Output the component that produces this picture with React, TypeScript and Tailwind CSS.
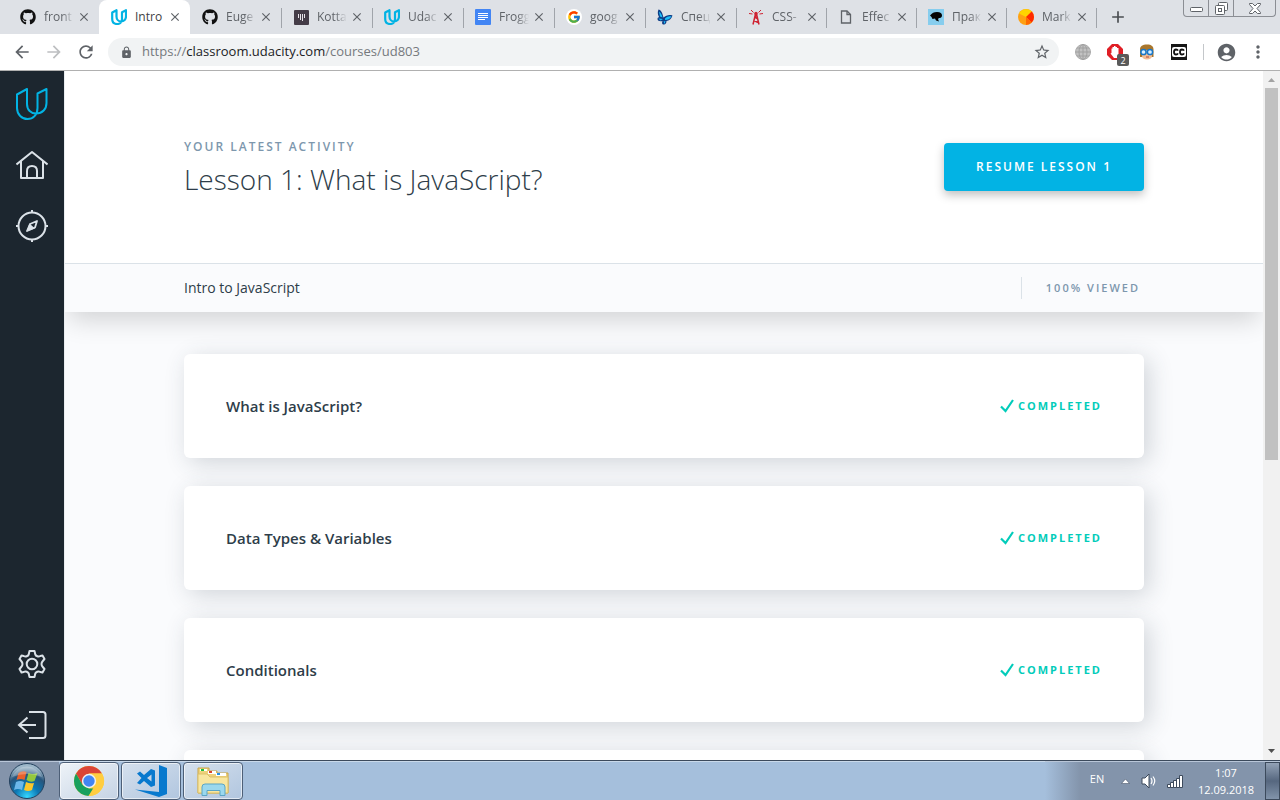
import type { ReactNode } from "react";
import { FaGithub } from "react-icons/fa";
import { FcGoogle } from "react-icons/fc";
import {
  MdAccountCircle,
  MdAdd,
  MdArrowBack,
  MdArrowForward,
  MdClose,
  MdLock,
  MdMoreVert,
  MdRefresh,
  MdStarBorder,
} from "react-icons/md";

function UdacityMark({ size, stroke }: { size: number; stroke: number }) {
  return (
    <svg width={size} height={size} viewBox="0 0 32 32" fill="none" stroke="#02b3e4" strokeWidth={stroke} strokeLinejoin="round">
      <path d="M1 6.500 11 1v15c0 6 4 9.500 9 9.500C26.500 25.500 30.500 21 30.500 15V1L21.500 5.500V20c0 7-4.500 11-10 11S1 26.500 1 20Z" />
    </svg>
  );
}

function UdacityFavicon() {
  return (
    <svg width="16" height="16" viewBox="0 0 16 16" fill="none" stroke="#02b3e4" strokeWidth="2.200" strokeLinejoin="round">
      <path d="M1.200 3.500 5.500 1.200v6.300C5.500 10.500 7.500 12.500 10 12.500c3 0 5-2.200 5-5.200V1.200l-4 2V10c0 3-2.200 5-4.800 5-3 0-5-2-5-5Z" />
    </svg>
  );
}

function KottansFavicon() {
  return (
    <svg width="15" height="15" viewBox="0 0 15 15">
      <rect width="15" height="15" rx="1" fill="#443c47" />
      <path d="M4.500 4v4M6.500 4v6M8.500 4v7M10.500 4v4" stroke="#e8e4ea" />
    </svg>
  );
}

function DocsFavicon() {
  return (
    <svg width="16" height="16" viewBox="0 0 16 16">
      <rect width="16" height="16" rx="1" fill="#4285f4" />
      <path d="M3 4.500h10M3 6.500h10M3 8.500h10M3 10.500h7" stroke="#fff" />
    </svg>
  );
}

function ButterflyFavicon() {
  return (
    <svg width="16" height="16" viewBox="0 0 16 16">
      <path d="M1.500.5C4 1 5.500 4 6.500 8.500 9 6.500 12 5.500 15.500 6.500c-1 3.500-3.500 5-6 5.500 0 2-1 3.500-2.500 3.500-2.500 0-2-2-1.500-3.500C3 12.500.5 12 .5 10c0-1 .5-1.500 1.500-2C.5 5.500.5 2.500 1.500.5Z" fill="#0d3c86" />
      <path d="M2 2.500C4 4 5 6 5.500 8.500L3 7.500ZM1.500 9.500 6 10l-2.500 1.500ZM8 9.500c2-2 4-2.500 6.500-2-1.500 2.500-3.500 3.500-6.500 3.500Zm-1.500 3 2-.5-1 3Z" fill="#1fc0fa" />
    </svg>
  );
}

function TowerFavicon() {
  return (
    <svg width="16" height="16" viewBox="0 0 16 16" fill="none" stroke="#cf2232">
      <path d="M7.500 5 5 15.500M8.500 5 11 15.500M6 11.500l4 2M7 8l2.500 2M6.500 7h3" strokeWidth="1.500" />
      <path d="m3 1 2.500 2.500M1 4.500l3.500.5M13 1l-2.500 2.500M15 4.500l-3.500.5" />
      <circle cx="8" cy="4.500" r="1.700" fill="#cf2232" stroke="none" />
    </svg>
  );
}

function PageFavicon() {
  return (
    <svg width="12" height="14" viewBox="0 0 12 14" fill="none" stroke="#5f6368" strokeWidth="1.300">
      <path d="M1.500 1h5.500l3.500 3.500V13h-9Z" />
      <path d="M7 1v3.500h3.500" />
    </svg>
  );
}

function HeadFavicon() {
  return (
    <svg width="16" height="16" viewBox="0 0 16 16">
      <rect width="16" height="16" fill="#86cdee" />
      <path d="M2 6.500C4 4 6 3 9 3c3.500 0 5 1.500 5 3.500S12.500 9 11 9l-1 1 1 2.500L8 11.500 7 9.500 4.500 10 3.500 8Z" fill="#050505" />
    </svg>
  );
}

function OrangeFavicon() {
  return (
    <svg width="16" height="16" viewBox="0 0 16 16">
      <circle cx="8" cy="8" r="8" fill="#ffa012" />
      <path d="M8 8 1 4.500A8 8 0 0 1 13.700 2.400Z" fill="#ffd400" />
      <path d="m8 8 5.700-5.600A8 8 0 0 1 13.700 13.600Z" fill="#ff2a00" />
      <path d="m8 8 5.700 5.600A8 8 0 0 1 8 16Z" fill="#ff6a00" />
    </svg>
  );
}

type Tab = { title: string; icon: ReactNode; active?: boolean; line?: boolean; width: string };

const wide = "w-[91px]";
const narrow = "w-[90px]";

const tabs: Tab[] = [
  { title: "front", icon: <FaGithub size={16} color="#111" />, width: wide },
  { title: "Intro", icon: <UdacityFavicon />, active: true, width: wide },
  { title: "Euge", icon: <FaGithub size={16} color="#111" />, width: wide, line: true },
  { title: "Kotta", icon: <KottansFavicon />, width: wide, line: true },
  { title: "Udac", icon: <UdacityFavicon />, width: wide, line: true },
  { title: "Frogg", icon: <DocsFavicon />, width: wide, line: true },
  {
    title: "goog",
    icon: (
      <span className="flex size-4 items-center justify-center rounded-full bg-white">
        <FcGoogle size={14} />
      </span>
    ),
    width: wide,
    line: true,
  },
  { title: "Спец", icon: <ButterflyFavicon />, width: wide, line: true },
  { title: "CSS-", icon: <TowerFavicon />, width: narrow, line: true },
  { title: "Effec", icon: <PageFavicon />, width: narrow, line: true },
  { title: "Прак", icon: <HeadFavicon />, width: narrow, line: true },
  { title: "Mark", icon: <OrangeFavicon />, width: narrow, line: true },
];

function TabStrip() {
  return (
    <div className="flex h-[34px] shrink-0 bg-[#dee1e6] pl-2">
      {tabs.map((tab, i) => (
        <div
          key={i}
          className={`relative flex shrink-0 items-center pl-3 ${tab.width} ${tab.active ? "rounded-t-lg bg-white" : ""}`}
        >
          <button type="button" className="flex min-w-0 items-center gap-2">
            <span className="flex w-4 shrink-0 items-center justify-center">{tab.icon}</span>
            <span
              className={`w-[30px] overflow-hidden text-left text-xs whitespace-nowrap ${
                tab.active ? "text-[#3c4043]" : "text-[#5f6368] [mask-image:linear-gradient(to_right,#000_60%,transparent)]"
              }`}
            >
              {tab.title}
            </span>
          </button>
          <button type="button" aria-label={`Close ${tab.title}`} className="ml-[3px] text-[#5f6368]">
            <MdClose size={14} />
          </button>
          {tab.line && <span className="absolute top-2 -right-px h-5 w-px bg-[#a0a4aa]" />}
        </div>
      ))}
      <button type="button" aria-label="New tab" className="ml-3 text-[#4a4e52]">
        <MdAdd size={20} />
      </button>
      <div className="mr-1 ml-auto flex h-[17px] self-start rounded-b border border-t-0 border-[#8b8e94] text-[#5f6368]">
        <button type="button" aria-label="Minimize" className="flex w-[25px] items-center justify-center border-r border-[#8b8e94]">
          <svg width="13" height="6" viewBox="0 0 13 6" className="mt-1">
            <rect x=".5" y=".5" width="12" height="4" rx="1" fill="#fff" stroke="currentColor" />
          </svg>
        </button>
        <button type="button" aria-label="Restore" className="flex w-[25px] items-center justify-center border-r border-[#8b8e94]">
          <svg width="13" height="13" viewBox="0 0 13 13" fill="#fff" stroke="currentColor">
            <rect x="3.500" y=".5" width="9" height="8" rx="1" />
            <rect x=".5" y="3.500" width="9" height="9" rx="1" />
            <rect x="3.500" y="6.500" width="3" height="3" />
          </svg>
        </button>
        <button type="button" aria-label="Close window" className="flex w-[41px] items-center justify-center">
          <svg width="12" height="11" viewBox="0 0 12 11" fill="#fff" stroke="currentColor">
            <path d="M.5.5h3L6 3 8.500.5h3v1L8 5.500l3.500 4v1h-3L6 8l-2.500 2.500h-3v-1l3.500-4-3.500-4Z" />
          </svg>
        </button>
      </div>
    </div>
  );
}

function ToolButton({ label, children }: { label: string; children: ReactNode }) {
  return (
    <button type="button" aria-label={label} className="flex w-8 shrink-0 items-center justify-center text-[#5f6368]">
      {children}
    </button>
  );
}

function Toolbar() {
  return (
    <div className="flex h-[37px] shrink-0 items-center border-b border-[#b0b0b0] bg-white px-1.5">
      <ToolButton label="Back"><MdArrowBack size={20} /></ToolButton>
      <ToolButton label="Forward"><MdArrowForward size={20} color="#bdbfc1" /></ToolButton>
      <ToolButton label="Reload"><MdRefresh size={20} /></ToolButton>
      <div className="mr-2 ml-1.5 flex h-7 min-w-0 flex-1 items-center rounded-full bg-[#f1f3f4] pr-2 pl-3 text-[13px] text-[#75797d]">
        <MdLock size={13} className="mr-[9px] shrink-0 text-[#5f6368]" />
        <span className="whitespace-nowrap">
          https://<span className="text-[#202124]">classroom.udacity.com</span>/courses/ud803
        </span>
        <input type="text" aria-label="Address" className="min-w-0 flex-1 bg-transparent outline-none" />
        <button type="button" aria-label="Bookmark this page" className="text-[#5f6368]">
          <MdStarBorder size={18} />
        </button>
      </div>
      <ToolButton label="Translate">
        <svg width="16" height="16" viewBox="0 0 16 16" fill="none" stroke="#a0a0a0">
          <circle cx="8" cy="8" r="7.500" fill="#c2c2c2" stroke="#adadad" />
          <path d="M.5 8h15M8 .5v15M2 4h12M2 12h12" />
          <ellipse cx="8" cy="8" rx="4" ry="7.500" />
        </svg>
      </ToolButton>
      <ToolButton label="Ad blocker">
        <span className="relative">
          <svg width="16" height="16" viewBox="0 0 16 16">
            <path d="M5 0h6l5 5v6l-5 5H5l-5-5V5Z" fill="#e01e25" />
            <path d="M4.500 9V4.500h1V3H7V2h1.500v1H10v1h1.500v6L10 14H7L3.500 9.500Z" fill="#fff" />
          </svg>
          <span className="absolute top-2.5 left-2.5 flex h-3 w-3 items-center justify-center rounded-xs bg-[#5a5a5a] text-[9px] leading-none text-white">2</span>
        </span>
      </ToolButton>
      <ToolButton label="Profile helper">
        <svg width="16" height="16" viewBox="0 0 16 16">
          <path d="M1 13V5.500C1 2 3.500.5 8 .5s6.500 2 6.500 5V13Z" fill="#a9762c" />
          <path d="M3 6h10v6c0 2-2 3.500-5 3.500S3 14 3 12Z" fill="#f3bd94" />
          <path d="M7 13h3" stroke="#b5463c" />
          <circle cx="4.500" cy="8" r="2.600" fill="#d9efff" stroke="#1877c9" strokeWidth="1.500" />
          <circle cx="11" cy="8" r="2.600" fill="#d9efff" stroke="#1877c9" strokeWidth="1.500" />
        </svg>
      </ToolButton>
      <ToolButton label="Closed captions">
        <svg width="16" height="16" viewBox="0 0 16 16" fill="none">
          <rect width="16" height="16" fill="#161616" />
          <rect x="1" y="3" width="14" height="10" rx="2" fill="#fff" />
          <path d="M7 6.700Q6.500 5.500 5 5.500 3 5.500 3 8t2 2.500q1.500 0 2-1.200M13 6.700Q12.500 5.500 11 5.500 9 5.500 9 8t2 2.500q1.500 0 2-1.200" stroke="#111" strokeWidth="1.800" />
        </svg>
      </ToolButton>
      <span className="mr-1.5 ml-2 h-4 w-px bg-[#c4c7ca]" />
      <ToolButton label="Account"><MdAccountCircle size={21} /></ToolButton>
      <ToolButton label="Menu"><MdMoreVert size={20} /></ToolButton>
    </div>
  );
}

function NavLink({ label, children }: { label: string; children: ReactNode }) {
  return (
    <a href="#" aria-label={label} className="flex size-8 items-center justify-center">
      {children}
    </a>
  );
}

function Sidebar() {
  const line = { fill: "none", stroke: "#dbe2e8", strokeWidth: 2 } as const;
  return (
    <nav className="flex w-16 shrink-0 flex-col items-center gap-[29px] bg-[#1c262f] pt-[17px] pb-[19px]">
      <NavLink label="Udacity"><UdacityMark size={32} stroke={2} /></NavLink>
      <NavLink label="Home">
        <svg width="32" height="32" viewBox="0 0 32 32" {...line} strokeLinejoin="round">
          <path d="M.5 15.500 16 3l15.500 12.500M5 12.500V29h22V12.500" />
          <path d="M11 29v-7c0-3 2-5 5-5s5 2 5 5v7" />
        </svg>
      </NavLink>
      <NavLink label="Catalog">
        <svg width="32" height="32" viewBox="0 0 32 32" {...line}>
          <circle cx="16" cy="16" r="13.500" />
          <path d="M16 0v3M16 29v3M0 16h3M29 16h3" />
          <path d="m21 11-2 6.500-8 3.500 3-7Z" strokeWidth="1.800" strokeLinejoin="round" />
          <path d="m10.500 21.500 3-8 5.500 5Z" fill="#dbe2e8" stroke="none" />
        </svg>
      </NavLink>
      <div className="mt-auto">
        <NavLink label="Settings">
          <svg width="32" height="32" viewBox="0 0 32 32" {...line} strokeLinejoin="round">
            <circle cx="16" cy="16" r="5.300" />
            <path d="M13.500 3h5l.8 3.500q.5 1.200 2 1.800t3-.3l2.200-.5 2 3.500-1.700 2q-1.300 1.400-1.300 3t1.300 3l1.700 2-2 3.500-2.200-.5q-1.500-.9-3-.3t-2 1.800l-.8 3.500h-5l-.8-3.500q-.5-1.200-2-1.800t-3 .3l-2.200.5-2-3.500 1.700-2q1.300-1.400 1.300-3t-1.300-3l-1.700-2 2-3.500 2.200.5q1.500.9 3 .3t2-1.800Z" />
          </svg>
        </NavLink>
      </div>
      <NavLink label="Log out">
        <svg width="32" height="32" viewBox="0 0 32 32" {...line}>
          <path d="M13 3h14q2.500 0 2.500 2.500v21q0 2.500-2.500 2.500H13" />
          <path d="M20 16H3M11.500 8.500 3 16l8.500 7.500" />
        </svg>
      </NavLink>
    </nav>
  );
}

const lessons = ["What is JavaScript?", "Data Types & Variables", "Conditionals", "Loops"];

function LessonCard({ title }: { title: string }) {
  return (
    <a
      href="#"
      className="flex h-[104px] shrink-0 items-center justify-between rounded-md bg-white px-[42px] shadow-[5px_5px_25px_0_rgba(46,61,73,0.2)]"
    >
      <h2 className="text-[15px] font-semibold">{title}</h2>
      <span className="flex items-center gap-1 text-[11px] font-bold tracking-[2px] text-[#02ccba]">
        <svg width="14" height="14" viewBox="0 0 14 14" fill="none" stroke="currentColor" strokeWidth="2.200">
          <path d="m1 7.500 4.500 4.500L13 1" />
        </svg>
        COMPLETED
      </span>
    </a>
  );
}

function Course() {
  return (
    <main className="flex min-w-0 flex-1 flex-col overflow-hidden border-l border-[#e9edf0] bg-[#fafbfd] text-[#2e3d49]">
      <header className="z-10 shrink-0 bg-white shadow-[0_12px_24px_-4px_rgba(0,0,0,0.16)]">
        <div className="mx-auto flex h-48 max-w-[960px] items-center justify-between">
          <div className="pt-1">
            <p className="text-xs leading-5 font-semibold tracking-[2px] text-[#7d97ad]">YOUR LATEST ACTIVITY</p>
            <h1 className="text-[28px] leading-[44px] font-light">Lesson 1: What is JavaScript?</h1>
          </div>
          <button
            type="button"
            className="h-12 rounded bg-[#02b3e4] px-8 text-xs font-semibold tracking-[2px] text-white shadow-[0_4px_10px_0_rgba(0,0,0,0.25)]"
          >
            RESUME LESSON 1
          </button>
        </div>
        <div className="border-t border-[#dbe2e8] bg-[#fafbfd]">
          <div className="mx-auto flex h-12 max-w-[960px] items-center justify-between">
            <p className="text-sm">Intro to JavaScript</p>
            <p className="border-l border-[#dbe2e8] pr-1 pl-6 text-[11px] leading-[22px] font-semibold tracking-[2px] text-[#7d97ad]">100% VIEWED</p>
          </div>
        </div>
      </header>
      <section className="mx-auto mt-[42px] flex min-h-0 w-full max-w-[960px] flex-1 flex-col gap-7">
        {lessons.map((title) => (
          <LessonCard key={title} title={title} />
        ))}
      </section>
    </main>
  );
}

function Scrollbar() {
  return (
    <div className="flex w-[17px] shrink-0 flex-col items-center bg-[#f1f1f1]">
      <svg width="17" height="17" viewBox="0 0 17 17"><path d="M5 11h7L8.500 7Z" fill="#a3a3a3" /></svg>
      <div className="h-[54%] w-[13px] bg-[#c1c1c1]" />
      <svg width="17" height="17" viewBox="0 0 17 17" className="mt-auto"><path d="M5 6h7l-3.500 4Z" fill="#505050" /></svg>
    </div>
  );
}

function ChromeIcon() {
  return (
    <svg width="32" height="32" viewBox="0 0 32 32">
      <circle cx="16" cy="16" r="15" fill="#fdd033" />
      <path d="M3 8.500A15 15 0 0 1 29 8.500H16L9.500 19.700Z" fill="#db4437" />
      <path d="M3 8.500 9.500 19.700 16 23.500h6.500L15.500 31A15 15 0 0 1 3 8.500Z" fill="#18a05e" />
      <path d="M29 8.500A15 15 0 0 1 15.500 31l7-11.500V12L16 8.500Z" fill="#ffcd40" />
      <circle cx="16" cy="16" r="7.200" fill="#f1f1f1" />
      <circle cx="16" cy="16" r="5.700" fill="#4285f4" />
    </svg>
  );
}

function CodeIcon() {
  return (
    <svg width="34" height="34" viewBox="0 0 34 34" fill="#0879ce">
      <path d="m25 1 8 3v26l-8 3L1 25.500l24 2.500Z" />
      <path fillRule="evenodd" d="m17 5 4 1.500v15L17 23l-7-6-4 3.500L3 19l4.500-5L3 9.500 6 7.500l4 3.500Zm.5 5.500-4.500 3.500 4.500 3.500Z" />
    </svg>
  );
}

function ExplorerIcon() {
  return (
    <svg width="34" height="32" viewBox="0 0 34 32">
      <path d="M2 3h11v3h8v2h11v20H2Z" fill="#efd27c" stroke="#c9a548" />
      <path d="M4 4h7v2H4Z" fill="#fff" /><path d="M5 4h3v2H5Z" fill="#1fbf3c" />
      <path d="M12 6h8v3h-8Z" fill="#fff" /><path d="M13 6h3v2h-3Z" fill="#d8432a" />
      <path d="M20 8h10v3H20Z" fill="#fff" /><path d="M21 8h3v2h-3Z" fill="#2493e6" />
      <path d="M2 9h9l3 3h18v16H2Z" fill="#f8e6a0" stroke="#dcc068" />
      <path d="M6 30.500V22q0-3 3-3h17q3 0 3 3v8.500h-5v-5H11v5Z" fill="#9bd8ee" stroke="#5aa5c6" />
    </svg>
  );
}

function StartIcon() {
  return (
    <svg width="38" height="38" viewBox="0 0 38 38">
      <defs>
        <radialGradient id="orb" cx=".5" cy=".95" r=".85">
          <stop offset="0" stopColor="#35d8ff" />
          <stop offset=".4" stopColor="#0c78b4" />
          <stop offset=".75" stopColor="#27557c" />
          <stop offset="1" stopColor="#9db7c9" />
        </radialGradient>
      </defs>
      <circle cx="19" cy="19" r="17.500" fill="url(#orb)" stroke="#23415e" />
      <path d="M10.500 11q4-3 8-1l-2 8q-4-2-8 0Z" fill="#e8622c" />
      <path d="M20.500 11q4 2 9 0l-3 8q-4 2-8-1Z" fill="#94c83d" />
      <path d="M8 20q4-2 8 0l-2 8q-4-2-8 0Z" fill="#6cb8ea" />
      <path d="M18 20q4 2 8 1l-2 7q-4 2-8 0Z" fill="#fcc72b" />
      <path d="M4 15a16 16 0 0 1 30 0q-15-6-30 0Z" fill="#fff" opacity=".25" />
    </svg>
  );
}

const apps = [
  { label: "Google Chrome", icon: <ChromeIcon />, tone: "from-[#eef3f8] to-[#c5d3e4]" },
  { label: "Visual Studio Code", icon: <CodeIcon />, tone: "from-[#d5e0ed] to-[#b1c6df]" },
  { label: "Explorer", icon: <ExplorerIcon />, tone: "from-[#d5e0ed] to-[#b1c6df]" },
];

function Taskbar() {
  return (
    <footer className="flex h-10 shrink-0 border-t border-[#3c4a5c] bg-[#a5bfdc]">
      <div className="flex w-[59px] shrink-0 items-center border-t border-[#b9c6d8] bg-[#8494ab] pl-2">
        <button type="button" aria-label="Start"><StartIcon /></button>
      </div>
      <div className="flex flex-1 gap-0.5 border-t border-[#c9d9ea]">
        {apps.map((app) => (
          <button
            key={app.label}
            type="button"
            aria-label={app.label}
            className={`flex w-[60px] items-center justify-center rounded-sm border border-[#4d5f77] bg-linear-to-br inset-ring inset-ring-white/60 ${app.tone}`}
          >
            {app.icon}
          </button>
        ))}
      </div>
      <div className="flex items-center border-t border-[#b9c6d8] bg-linear-to-r from-[#a5bfdc] to-[#8394ab] to-15% pl-10 text-[11px] text-white">
        <button type="button" className="mb-1 w-6">EN</button>
        <button type="button" aria-label="Show hidden icons" className="ml-1 flex w-6 justify-center">
          <svg width="9" height="6" viewBox="0 0 9 6"><path d="m.5 5.500 4-4.500 4 4.500Z" fill="#fff" stroke="#4a5669" strokeWidth=".6" /></svg>
        </button>
        <button type="button" aria-label="Volume" className="flex w-6 justify-center">
          <svg width="16" height="16" viewBox="0 0 16 16" fill="none">
            <path d="M1 5h3l4-4v14l-4-4H1Z" fill="#fff" stroke="#3d4a5c" />
            <path d="M10 5q2 3 0 6M12 3.500q3.500 4.500 0 9" stroke="#fff" strokeWidth="1.200" />
          </svg>
        </button>
        <button type="button" aria-label="Network" className="ml-0.5 flex w-6 justify-center">
          <svg width="17" height="13" viewBox="0 0 17 13" fill="#fff" stroke="#3d4a5c">
            <path d="M.5 9.500h3v3h-3ZM3.500 7.500h3v5h-3ZM6.500 5.500h3v7h-3ZM9.500 3.500h3v9h-3ZM12.500.5h3v12h-3Z" />
          </svg>
        </button>
        <time dateTime="2018-09-12T01:07" className="ml-2 w-[62px] text-center leading-[17px]">
          1:07
          <br />
          12.09.2018
        </time>
        <button type="button" aria-label="Show desktop" className="ml-2 h-full w-[15px] border border-[#3c4a5c] bg-linear-to-b from-[#93a2b6] via-[#56677f] to-[#8294ab]" />
      </div>
    </footer>
  );
}

export default function App() {
  return (
    <div className="flex h-screen flex-col overflow-hidden font-['Open_Sans',sans-serif]">
      <TabStrip />
      <Toolbar />
      <div className="flex min-h-0 flex-1">
        <Sidebar />
        <Course />
        <Scrollbar />
      </div>
      <Taskbar />
    </div>
  );
}
